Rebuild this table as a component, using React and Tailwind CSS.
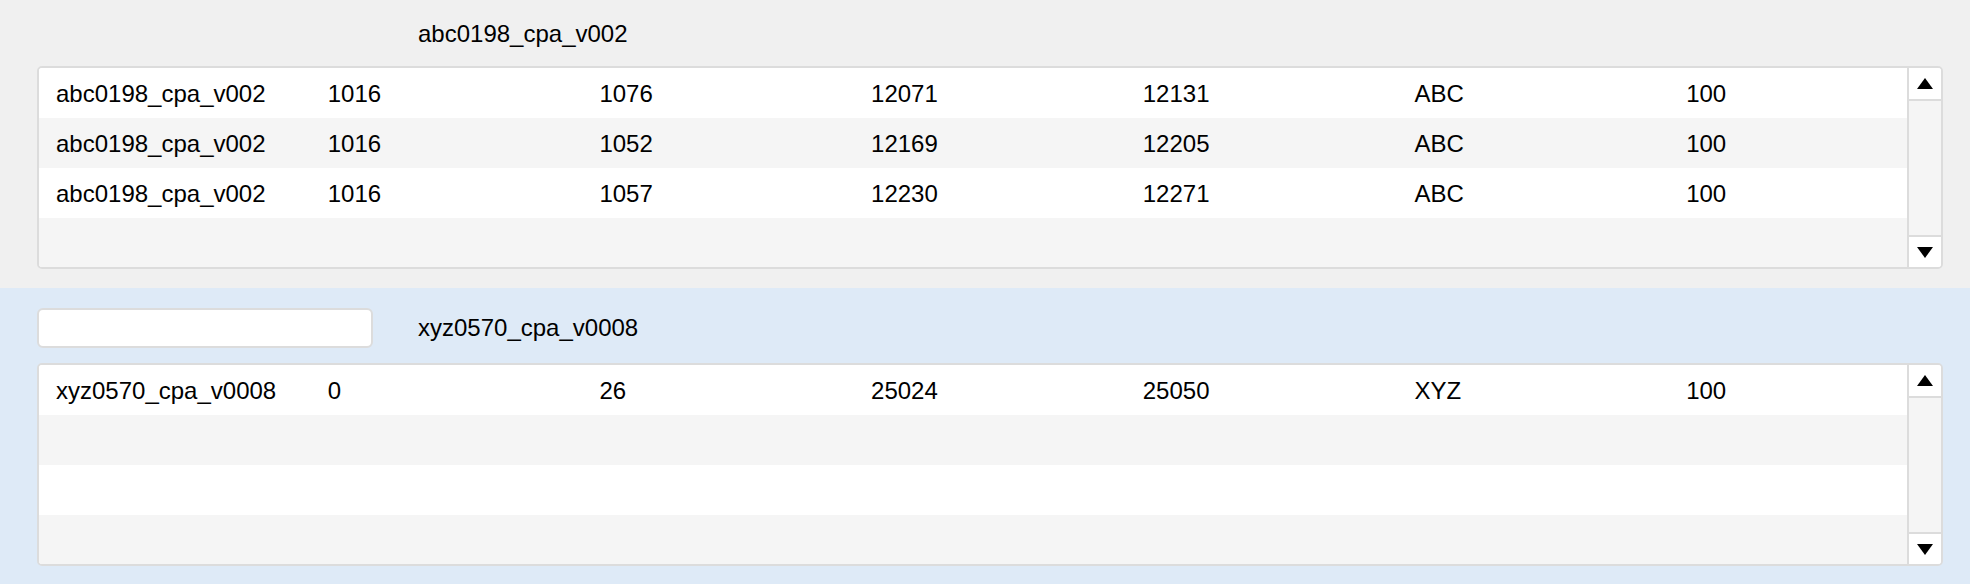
import React from "react";

const font = { fontFamily: '"Liberation Sans", Arial, Helvetica, sans-serif' };

const topRows = [
    ["abc0198_cpa_v002", "1016", "1076", "12071", "12131", "ABC", "100"],
    ["abc0198_cpa_v002", "1016", "1052", "12169", "12205", "ABC", "100"],
    ["abc0198_cpa_v002", "1016", "1057", "12230", "12271", "ABC", "100"],
    null,
];

const bottomRows = [
    ["xyz0570_cpa_v0008", "0", "26", "25024", "25050", "XYZ", "100"],
    null,
    null,
    null,
];

const Arrow = ({ down }) => (
    <svg width="16" height="11" viewBox="0 0 16 11" className="block shrink-0 w-[16px] h-[11px]">
        {down ? <polygon points="0,0 16,0 8,11" fill="#000" /> : <polygon points="8,0 16,11 0,11" fill="#000" />}
    </svg>
);

const Grid = ({ rows }) => {
    return (
        <div className="flex w-[1906px] h-[203px] border-2 border-[#dcdcdc] rounded-[5px] overflow-hidden bg-white">
            <div className="flex-1 overflow-hidden">
                {rows.map((row, i) => (
                    <div key={i} className={"flex h-[50px] items-center pt-[2px] " + (i % 2 === 1 ? "bg-[#f5f5f5]" : "bg-white")}>
                        {row &&
                            row.map((cell, j) => (
                                <div key={j} className="w-[271.7px] shrink-0 pl-[17px] text-[24px] text-black whitespace-nowrap">
                                    {cell}
                                </div>
                            ))}
                    </div>
                ))}
            </div>
            {/* scrollbar */}
            <div className="w-[34px] flex flex-col border-l-2 border-[#dcdcdc] bg-[#f5f5f5]">
                <div className="h-[33px] flex items-center justify-center bg-white border-b-2 border-[#dcdcdc]">
                    <Arrow />
                </div>
                <div className="flex-1" />
                <div className="h-[32px] flex items-center justify-center bg-white border-t-2 border-[#dcdcdc]">
                    <Arrow down />
                </div>
            </div>
        </div>
    );
};

export default function App() {
    return (
        <div className="w-[1970px] h-[584px] overflow-hidden" style={font}>
            <section className="bg-[#f0f0f0] h-[288px] pl-[37px] pt-[14px]">
                <div className="flex items-center h-[40px]">
                    <div className="w-[336px]" />
                    <div className="ml-[45px] text-[24px] text-black">abc0198_cpa_v002</div>
                </div>
                <div className="mt-[12px]">
                    <Grid rows={topRows} />
                </div>
            </section>
            <section className="bg-[#deeaf7] h-[296px] pl-[37px] pt-[20px]">
                <div className="flex items-center h-[40px]">
                    <input className="w-[336px] h-[40px] bg-white border-2 border-[#dcdcdc] rounded-[6px] outline-none" />
                    <div className="ml-[45px] text-[24px] text-black">xyz0570_cpa_v0008</div>
                </div>
                <div className="mt-[15px]">
                    <Grid rows={bottomRows} />
                </div>
            </section>
        </div>
    );
}
